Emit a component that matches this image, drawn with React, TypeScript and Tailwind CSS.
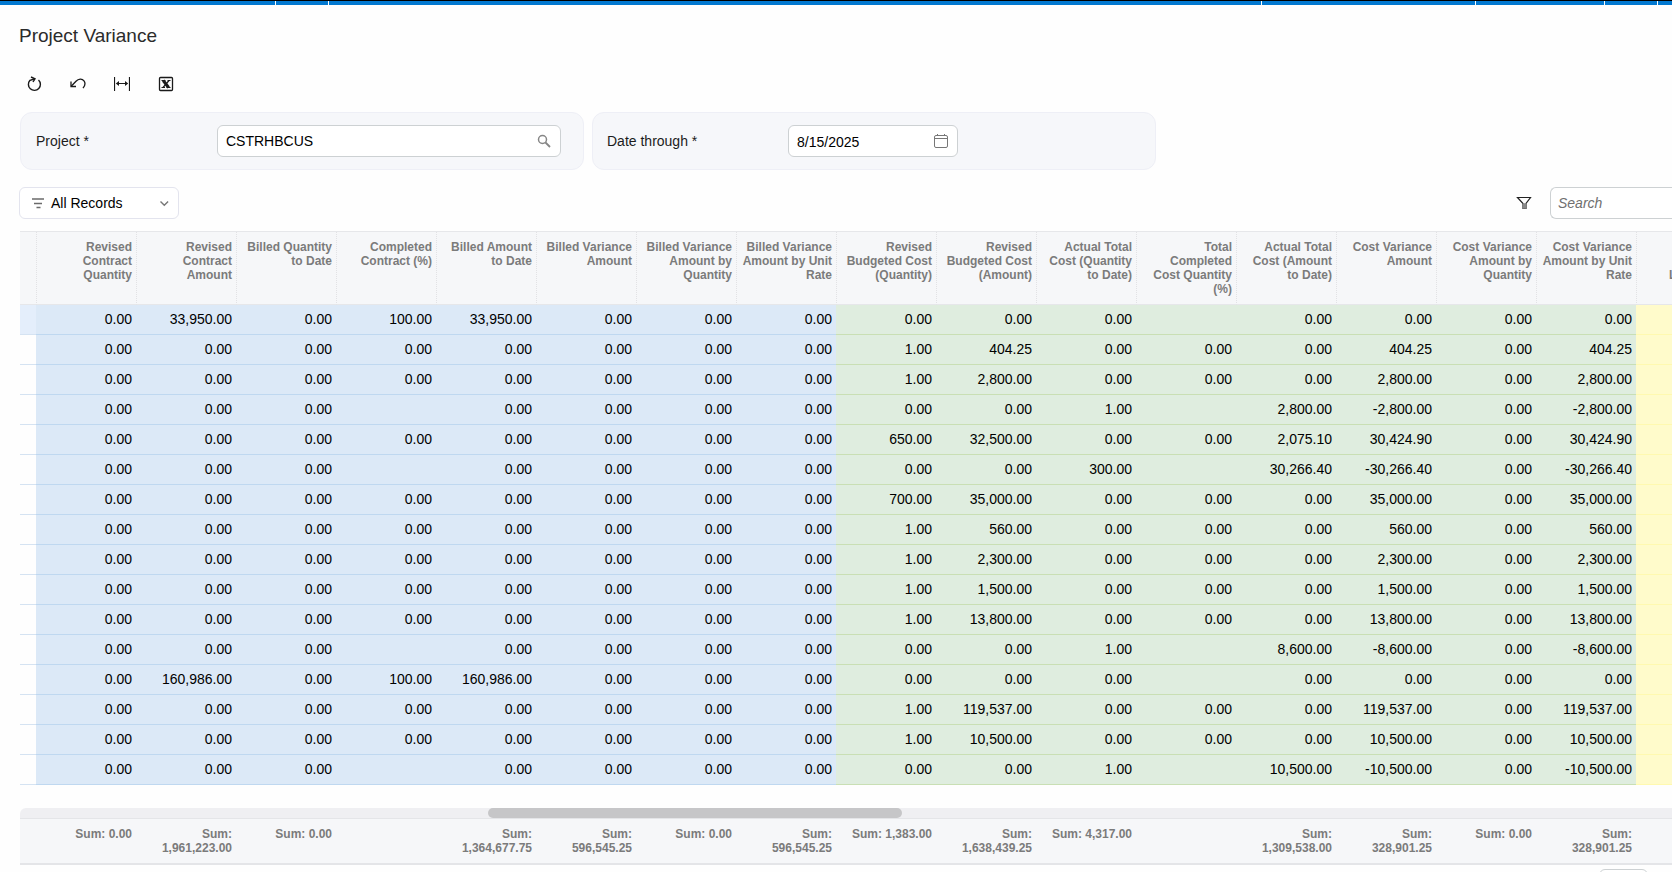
import React from 'react';
import { clsx } from 'clsx';

type Column = {
  title: string;
  sum?: string;
};

const columns: Column[] = [
  { title: 'Revised Contract Quantity', sum: '0.00' },
  { title: 'Revised Contract Amount', sum: '1,961,223.00' },
  { title: 'Billed Quantity to Date', sum: '0.00' },
  { title: 'Completed Contract (%)' },
  { title: 'Billed Amount to Date', sum: '1,364,677.75' },
  { title: 'Billed Variance Amount', sum: '596,545.25' },
  { title: 'Billed Variance Amount by Quantity', sum: '0.00' },
  { title: 'Billed Variance Amount by Unit Rate', sum: '596,545.25' },
  { title: 'Revised Budgeted Cost (Quantity)', sum: '1,383.00' },
  { title: 'Revised Budgeted Cost (Amount)', sum: '1,638,439.25' },
  { title: 'Actual Total Cost (Quantity to Date)', sum: '4,317.00' },
  { title: 'Total Completed Cost Quantity (%)' },
  { title: 'Actual Total Cost (Amount to Date)', sum: '1,309,538.00' },
  { title: 'Cost Variance Amount', sum: '328,901.25' },
  { title: 'Cost Variance Amount by Quantity', sum: '0.00' },
  { title: 'Cost Variance Amount by Unit Rate', sum: '328,901.25' },
];

// the first 8 columns are billing, the rest are cost
const BILLING_COLUMNS = 8;

// contract amount, completed %, billed amount, budget qty, budget amount,
// actual qty, cost completed %, actual amount, cost variance
const records = [
  ['33,950.00', '100.00', '33,950.00', '0.00', '0.00', '0.00', '', '0.00', '0.00'],
  ['0.00', '0.00', '0.00', '1.00', '404.25', '0.00', '0.00', '0.00', '404.25'],
  ['0.00', '0.00', '0.00', '1.00', '2,800.00', '0.00', '0.00', '0.00', '2,800.00'],
  ['0.00', '', '0.00', '0.00', '0.00', '1.00', '', '2,800.00', '-2,800.00'],
  ['0.00', '0.00', '0.00', '650.00', '32,500.00', '0.00', '0.00', '2,075.10', '30,424.90'],
  ['0.00', '', '0.00', '0.00', '0.00', '300.00', '', '30,266.40', '-30,266.40'],
  ['0.00', '0.00', '0.00', '700.00', '35,000.00', '0.00', '0.00', '0.00', '35,000.00'],
  ['0.00', '0.00', '0.00', '1.00', '560.00', '0.00', '0.00', '0.00', '560.00'],
  ['0.00', '0.00', '0.00', '1.00', '2,300.00', '0.00', '0.00', '0.00', '2,300.00'],
  ['0.00', '0.00', '0.00', '1.00', '1,500.00', '0.00', '0.00', '0.00', '1,500.00'],
  ['0.00', '0.00', '0.00', '1.00', '13,800.00', '0.00', '0.00', '0.00', '13,800.00'],
  ['0.00', '', '0.00', '0.00', '0.00', '1.00', '', '8,600.00', '-8,600.00'],
  ['160,986.00', '100.00', '160,986.00', '0.00', '0.00', '0.00', '', '0.00', '0.00'],
  ['0.00', '0.00', '0.00', '1.00', '119,537.00', '0.00', '0.00', '0.00', '119,537.00'],
  ['0.00', '0.00', '0.00', '1.00', '10,500.00', '0.00', '0.00', '0.00', '10,500.00'],
  ['0.00', '', '0.00', '0.00', '0.00', '1.00', '', '10,500.00', '-10,500.00'],
];

const toCells = ([amount, completed, billed, qty, budget, actualQty, costPct, actual, variance]: string[]) => [
  '0.00', amount, '0.00', completed, billed, '0.00', '0.00', '0.00',
  qty, budget, actualQty, costPct, actual, variance, '0.00', variance,
];

const GridColumns = () => (
  <colgroup>
    <col className="w-4" />
    {columns.map(c => (
      <col key={c.title} className="w-[100px]" />
    ))}
    <col className="w-[100px]" />
  </colgroup>
);

const RefreshIcon = () => (
  <svg className="h-4 w-4" viewBox="0 0 16 16" fill="none" stroke="currentColor" strokeWidth="1.4">
    <path d="M12.500 4A6 6 0 1 1 4 4.300L8.300 3" />
    <path d="M5 1 9 2.800 7 6" />
  </svg>
);

const UndoIcon = () => (
  <svg className="h-4 w-4" viewBox="0 0 16 16" fill="none" stroke="currentColor" strokeWidth="1.3">
    <path d="M1.200 10.300 6 5.200C8.500 2.600 12 2.200 14 4.800c1.600 2.200 1.100 4.800-1 7.400" />
    <path d="M1 5.500v5H6" />
  </svg>
);

const FitColumnsIcon = () => (
  <svg className="h-4 w-4" viewBox="0 0 16 16" fill="none" stroke="currentColor">
    <path d="M.5 1v14M15.500 1v14" strokeWidth="1.200" />
    <path d="M3 7.500h10" />
    <path d="M1.800 7.500 5 5v5zM14.200 7.500 11 5v5z" fill="currentColor" stroke="none" />
  </svg>
);

const ExcelIcon = () => (
  <svg className="h-4 w-4" viewBox="0 0 16 16" fill="none" stroke="currentColor">
    <rect x="1.500" y="1.500" width="13" height="13" rx="1" strokeWidth="1.300" />
    <path d="M5.200 4.500 10.600 11.500" strokeWidth="3" />
    <path d="M11 4.500 5 11.500M3.500 4.500h4M9.500 4.500h3M3.500 11.500h3.500M8.500 11.500h4" strokeWidth="1.200" />
  </svg>
);

const SearchIcon = () => (
  <svg className="h-4 w-4" viewBox="0 0 16 16" fill="none" stroke="currentColor">
    <circle cx="6.500" cy="6.500" r="4" strokeWidth="1.500" />
    <path d="m9.500 9.500 4.500 4.500" strokeWidth="1.800" />
  </svg>
);

const CalendarIcon = () => (
  <svg className="h-4 w-4" viewBox="0 0 16 16" fill="none" stroke="currentColor">
    <rect x="1.500" y="2.500" width="13" height="12" rx="1.500" />
    <path d="M1.500 5.500h13M4.500 1v1.500M11.500 1v1.500" />
  </svg>
);

const FunnelIcon = () => (
  <svg className="h-4 w-4" viewBox="0 0 16 16" fill="none" stroke="currentColor">
    <path d="M1.500 2.500h13L10 8.500v5H7v-5z" strokeWidth="1.200" />
    <path d="M7 8.500h3v5H7z" fill="#888" stroke="#888" strokeWidth=".5" />
  </svg>
);

const toolbar = [
  { label: 'Refresh', icon: <RefreshIcon /> },
  { label: 'Cancel', icon: <UndoIcon /> },
  { label: 'Fit to screen', icon: <FitColumnsIcon /> },
  { label: 'Export to Excel', icon: <ExcelIcon /> },
];

const TopBar = () => (
  <div className="flex h-[5px] gap-px overflow-hidden border-t border-black bg-white">
    <div className="w-[275px] shrink-0 bg-[#0278d0]" />
    <div className="w-[52px] shrink-0 bg-[#0278d0]" />
    <div className="flex-1 bg-[#0278d0]" />
    <div className="w-[213px] shrink-0 bg-[#0278d0]" />
    <div className="w-32 shrink-0 bg-[#0278d0]" />
    <div className="w-[52px] shrink-0 bg-[#0278d0]" />
    <div className="w-3.5 shrink-0 bg-[#0278d0]" />
  </div>
);

const Filters = () => (
  <div className="flex gap-2 pl-5 text-sm">
    <div className="flex h-[58px] w-[564px] items-center rounded-xl border border-[#eeeff6] bg-[#f6f7fa] pl-[15px] pr-[22px]">
      <label htmlFor="project" className="w-[181px]">Project *</label>
      <div className="flex h-8 flex-1 items-center rounded-md border border-[#cdd1d3] bg-white px-2">
        <input id="project" defaultValue="CSTRHBCUS" className="min-w-0 flex-1 bg-transparent text-black outline-none" />
        <button aria-label="Select project" className="text-[#868686]">
          <SearchIcon />
        </button>
      </div>
    </div>
    <div className="flex h-[58px] w-[564px] items-center rounded-xl border border-[#eeeff6] bg-[#f6f7fa] pl-[14px]">
      <label htmlFor="date-through" className="w-[181px]">Date through *</label>
      <div className="flex h-8 w-[170px] items-center rounded-md border border-[#cdd1d3] bg-white px-2">
        <input id="date-through" defaultValue="8/15/2025" className="min-w-0 flex-1 bg-transparent pt-0.5 text-black outline-none" />
        <button aria-label="Open calendar" className="text-[#777]">
          <CalendarIcon />
        </button>
      </div>
    </div>
  </div>
);

const RecordsBar = () => (
  <div className="flex items-center justify-between pl-[19px] text-sm">
    <button className="flex h-8 w-40 items-center rounded-md border border-[#e3e4ee] bg-white px-2 text-black">
      <svg className="h-4 w-5" viewBox="0 0 20 16" stroke="#6b6b6b" strokeWidth="1.500">
        <path d="M4 4h12M6 8.500h8M8.500 12.500h4" />
      </svg>
      <span className="ml-[3px] flex-1 text-left">All Records</span>
      <svg className="h-3 w-3" viewBox="0 0 12 12" fill="none" stroke="#777" strokeWidth="1.400">
        <path d="m2.500 4.500 3.800 3.800 3.800-3.800" />
      </svg>
    </button>
    <div className="flex items-center">
      <button aria-label="Filter settings" className="mr-[18px] text-[#222]">
        <FunnelIcon />
      </button>
      <input
        type="search"
        aria-label="Search"
        placeholder="Search"
        className="h-8 w-[122px] rounded-l-md border border-r-0 border-[#cdd1d3] bg-white px-[7px] italic outline-none placeholder:text-[#707070]"
      />
    </div>
  </div>
);

const VarianceGrid = () => (
  <div className="ml-5 overflow-hidden border-t border-[#e6e7ea]">
    <table className="w-[1716px] table-fixed border-separate border-spacing-0 text-right">
      <GridColumns />
      <thead className="bg-[#f6f7f9] text-xs leading-[14px] text-[#7b7b7b]">
        <tr className="h-[73px]">
          <th className="border-b border-[#e6e7ea]" />
          {columns.map(c => (
            <th key={c.title} className="border-b border-l border-b-[#e6e7ea] border-l-[#e2e2e5] [border-left-style:dotted] pl-1 pr-1 pt-2 align-top">
              {c.title}
            </th>
          ))}
          <th className="border-b border-l border-b-[#e6e7ea] border-l-[#e2e2e5] [border-left-style:dotted] pl-8 pt-2 text-left align-top">
            <br />
            <br />
            L
          </th>
        </tr>
      </thead>
      <tbody className="text-sm leading-5 text-black">
        {records.map((record, row) => (
          <tr key={row} className="h-[30px]">
            <td className={clsx('border-b border-[#d5e3f2]', row === 0 && 'bg-[#e4eefb]')} />
            {toCells(record).map((value, i) => (
              <td
                key={i}
                className={clsx(
                  'border-b px-1 pb-px',
                  i < BILLING_COLUMNS ? 'border-[#bfd8f0] bg-[#dce9f7]' : 'border-[#c9dfb4] bg-[#dfeddf]'
                )}
              >
                {value}
              </td>
            ))}
            <td className="border-b border-[#fff9b0] bg-[#fffbcb]" />
          </tr>
        ))}
      </tbody>
    </table>

    <div className="mt-[23px] h-2.5 rounded-tl-md bg-[#efeff2]">
      <div className="ml-[28.3%] h-2.5 w-[25.1%] rounded-full bg-[#c6c6c8]" />
    </div>

    <table className="w-[1716px] table-fixed border-separate border-spacing-0 bg-[#f6f7f9] text-right text-xs leading-[14px] text-[#7b7b7b]">
      <GridColumns />
      <tbody>
        <tr className="h-[47px] font-bold">
          <td className="border-b-2 border-t border-[#e4e5e8]" />
          {columns.map(c => (
            <td key={c.title} className="border-b-2 border-t border-[#e4e5e8] px-1 pt-2 align-top">
              {c.sum && `Sum: ${c.sum}`}
            </td>
          ))}
          <td className="border-b-2 border-t border-[#e4e5e8]" />
        </tr>
      </tbody>
    </table>
  </div>
);

export default function App() {
  return (
    <div className="h-screen overflow-hidden bg-[#fefefe] font-['Liberation_Sans',Arial,sans-serif] text-[#1c1c1c]">
      <TopBar />
      <h1 className="ml-[19px] mt-[19px] text-[19px] leading-6 text-[#2b2b2b]">Project Variance</h1>

      <div className="mb-5 mt-7 flex gap-7 pl-[26px] text-[#1a1a1a]">
        {toolbar.map(item => (
          <button key={item.label} aria-label={item.label}>
            {item.icon}
          </button>
        ))}
      </div>

      <Filters />
      <div className="mb-3 mt-[17px]">
        <RecordsBar />
      </div>
      <VarianceGrid />

      {/* pager */}
      <div className="mt-1 flex justify-end pr-6">
        <input aria-label="Page" className="h-8 w-[49px] rounded-md border border-[#cdd1d3] bg-white" />
      </div>
    </div>
  );
}
